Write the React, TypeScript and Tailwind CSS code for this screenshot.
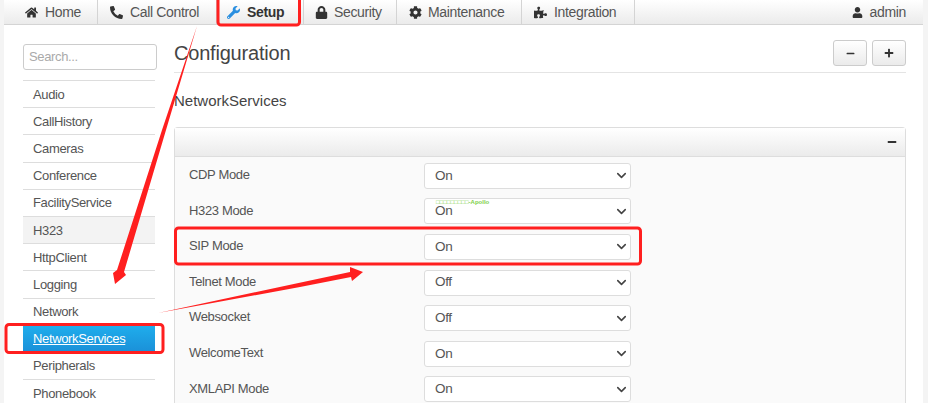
import { FaHome, FaPhoneAlt, FaWrench, FaLock, FaCog, FaPuzzlePiece, FaUser, FaMinus, FaPlus } from "react-icons/fa"
import { ChevronDown } from "lucide-react"

const TABS = [
  { label: "Home", icon: FaHome, w: "w-[94px]", pl: "pl-[21px]", gap: "gap-[7px]" },
  { label: "Call Control", icon: FaPhoneAlt, w: "w-[119px]", pl: "pl-[12px]", gap: "gap-[7px]" },
  { label: "Setup", icon: FaWrench, w: "w-[87px]", pl: "pl-[10px]", gap: "gap-[7px]", active: true },
  { label: "Security", icon: FaLock, w: "w-[93px]", pl: "pl-[11px]", gap: "gap-[6px]" },
  { label: "Maintenance", icon: FaCog, w: "w-[125px]", pl: "pl-[12px]", gap: "gap-[6px]" },
  { label: "Integration", icon: FaPuzzlePiece, w: "w-[113px]", pl: "pl-[12px]", gap: "gap-[7px]" },
]

const SIDE = ["Audio", "CallHistory", "Cameras", "Conference", "FacilityService", "H323", "HttpClient", "Logging", "Network", "NetworkServices", "Peripherals", "Phonebook"]

const ROWS = [
  { label: "CDP Mode", value: "On" },
  { label: "H323 Mode", value: "On" },
  { label: "SIP Mode", value: "On" },
  { label: "Telnet Mode", value: "Off" },
  { label: "Websocket", value: "Off" },
  { label: "WelcomeText", value: "On" },
  { label: "XMLAPI Mode", value: "On" },
]

export default function App() {
  return (
    <div className="relative h-[403px] w-[928px] overflow-hidden bg-[#f4f4f4] px-[4px] font-['Liberation_Sans',Arial,sans-serif] text-[14px] tracking-[-0.35px] text-[#555]">
      <div className="h-full w-[919px] bg-white">
        {/* top nav */}
        <div className="flex h-[25px] items-stretch border-b border-[#d4d4d4] bg-gradient-to-b from-white to-[#ebebeb]">
          {TABS.map(({ label, icon: Icon, w, pl, gap, active }) => (
            <div key={label} className={`flex items-center border-r border-[#d4d4d4] ${gap} ${w} ${pl} ${active ? "font-bold text-[#333]" : ""}`}>
              <Icon className={`text-[13px] ${active ? "text-[#2a8fe0]" : "text-[#333]"}`} />
              <span>{label}</span>
            </div>
          ))}
          <div className="ml-auto flex items-center gap-[7px] pr-[17px]">
            <FaUser className="text-[11px] text-[#333]" />
            <span>admin</span>
          </div>
        </div>

        <div className="flex pl-[19px] pr-[17px]">
          {/* sidebar */}
          <div className="w-[132px] shrink-0 pt-[19px]">
            <div className="flex h-[26px] w-[134px] items-center rounded-[3px] border border-[#ccc] px-[5px] text-[13px] text-[#aaa]">Search...</div>
            <div className="mt-[10px] text-[13px]">
              {SIDE.map((s) => (
                <div
                  key={s}
                  className={`flex h-[27.2px] items-center border-t border-[#ddd] pl-[10px] pt-[0.5px] ${s === "H323" ? "bg-[#f3f3f3]" : ""} ${s === "NetworkServices" ? "bg-gradient-to-b from-[#1fadec] to-[#1b90d8] text-white underline" : ""}`}
                >
                  {s}
                </div>
              ))}
            </div>
          </div>

          {/* main */}
          <div className="ml-[19px] min-w-0 flex-1">
            <div className="flex h-[48px] items-end justify-between border-b border-[#e4e4e4] pb-[6px]">
              <div className="text-[20px] leading-[26px] tracking-[-0.2px] text-[#444]">Configuration</div>
              <div className="flex gap-[5px]">
                <div className="flex h-[26px] w-[34px] items-center justify-center rounded-[3px] border border-[#ccc] bg-gradient-to-b from-white to-[#ebebeb]">
                  <FaMinus className="text-[9px] text-[#333]" />
                </div>
                <div className="flex h-[26px] w-[34px] items-center justify-center rounded-[3px] border border-[#ccc] bg-gradient-to-b from-white to-[#ebebeb]">
                  <FaPlus className="text-[10px] text-[#333]" />
                </div>
              </div>
            </div>
            <div className="mt-[19px] text-[15px] leading-[18px] tracking-normal text-[#444]">NetworkServices</div>
            <div className="mt-[17px] rounded-t-[4px] border border-b-0 border-[#ddd] bg-[#fafafa]">
              <div className="flex h-[29px] items-center justify-end border-b border-[#ddd] bg-gradient-to-b from-white to-[#ebebeb] pr-[8px]">
                <FaMinus className="text-[10px] text-[#333]" />
              </div>
              <div className="pt-[1px] text-[13px]">
                {ROWS.map((r) => (
                  <div key={r.label} className="flex h-[35.6px] items-center pl-[14px]">
                    <div className="w-[235px] pb-[2px]">{r.label}</div>
                    <div className="flex h-[26px] w-[207px] items-center justify-between rounded-[3px] border border-[#ddd] bg-white pl-[10px] pr-[1px] text-[13.5px]">
                      <span>{r.value}</span>
                      <ChevronDown size={15} strokeWidth={2.5} className="text-[#444]" />
                    </div>
                  </div>
                ))}
              </div>
            </div>
          </div>
        </div>
      </div>

      {/* watermark over the H323 select */}
      <div className="absolute left-[436px] top-[198px] text-[6px] font-bold leading-[8px] tracking-normal text-[#7ed04b]">□□□□□□□□□-Apollo</div>

      {/* red annotations drawn on top of the screenshot */}
      <svg className="absolute left-0 top-0" width="928" height="403" viewBox="0 0 928 403" fill="none">
        <rect x="218" y="-4" width="81.500" height="29" rx="3" stroke="#ff1f1f" strokeWidth="3" />
        <rect x="6" y="324.500" width="157" height="28" rx="3" stroke="#ff1f1f" strokeWidth="3" />
        <rect x="175.500" y="228" width="465" height="36" rx="3" stroke="#ff1f1f" strokeWidth="3" />
        <path d="M197 26 L166 130 L124 272 L126 275 L115 284 L113 273 L117 270 L162 130 Z" fill="#ff1f1f" />
        <path d="M158 313 L350 272 L350 267 L363 272 L352 281 L351 277 L300 287 Z" fill="#ff1f1f" />
      </svg>
    </div>
  )
}
